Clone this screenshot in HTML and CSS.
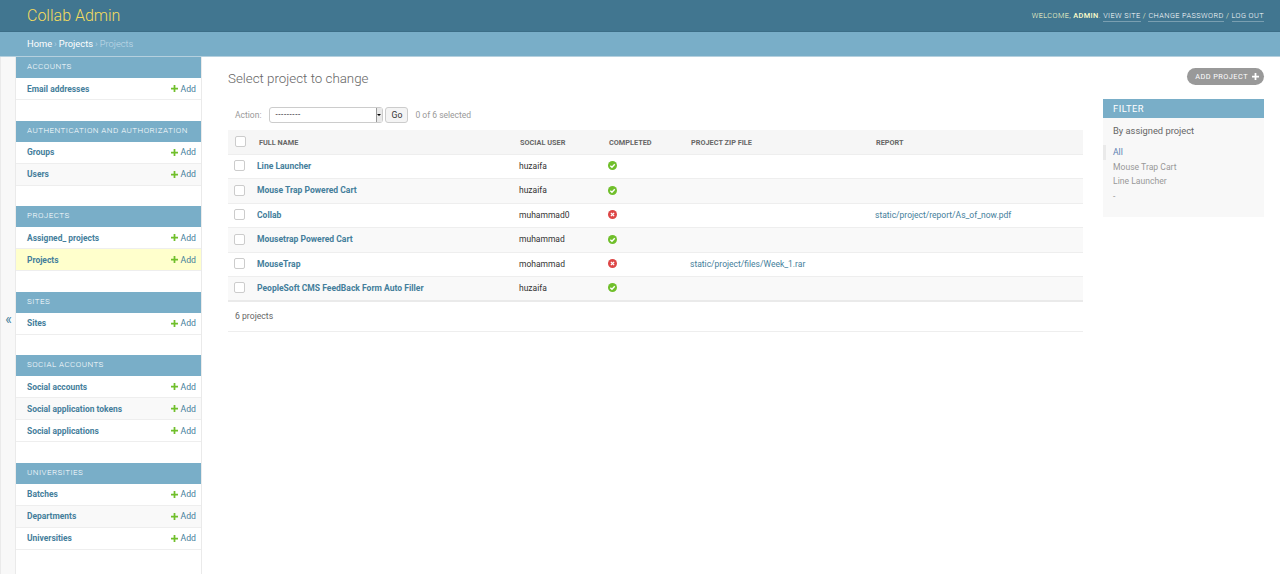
FILE: index.html
```html
<!DOCTYPE html>
<html lang="en">
<head>
<meta charset="utf-8">
<title>Select project to change</title>
<link rel="stylesheet" href="styles.css">
</head>
<body>
<header class="topbar">
  <div class="brand">Collab Admin</div>
  <div class="tools">WELCOME, <strong>ADMIN</strong>. <a>VIEW SITE</a> / <a>CHANGE PASSWORD</a> / <a>LOG OUT</a></div>
</header>
<nav class="crumbs"><a>Home</a> › <a>Projects</a> › Projects</nav>
<div class="shell">
  <button class="toggle">«</button>
  <aside class="sidebar">
    <section class="app"><h2>ACCOUNTS</h2><div class="mrow"><a class="model">Email addresses</a><a class="add"><svg class="plus" viewBox="0 0 8 8"><path d="M3 0h2v3h3v2H5v3H3V5H0V3h3z"/></svg>Add</a></div></section>
    <section class="app"><h2>AUTHENTICATION AND AUTHORIZATION</h2><div class="mrow"><a class="model">Groups</a><a class="add"><svg class="plus" viewBox="0 0 8 8"><path d="M3 0h2v3h3v2H5v3H3V5H0V3h3z"/></svg>Add</a></div><div class="mrow"><a class="model">Users</a><a class="add"><svg class="plus" viewBox="0 0 8 8"><path d="M3 0h2v3h3v2H5v3H3V5H0V3h3z"/></svg>Add</a></div></section>
    <section class="app"><h2>PROJECTS</h2><div class="mrow"><a class="model">Assigned_ projects</a><a class="add"><svg class="plus" viewBox="0 0 8 8"><path d="M3 0h2v3h3v2H5v3H3V5H0V3h3z"/></svg>Add</a></div><div class="mrow current"><a class="model">Projects</a><a class="add"><svg class="plus" viewBox="0 0 8 8"><path d="M3 0h2v3h3v2H5v3H3V5H0V3h3z"/></svg>Add</a></div></section>
    <section class="app"><h2>SITES</h2><div class="mrow"><a class="model">Sites</a><a class="add"><svg class="plus" viewBox="0 0 8 8"><path d="M3 0h2v3h3v2H5v3H3V5H0V3h3z"/></svg>Add</a></div></section>
    <section class="app"><h2>SOCIAL ACCOUNTS</h2><div class="mrow"><a class="model">Social accounts</a><a class="add"><svg class="plus" viewBox="0 0 8 8"><path d="M3 0h2v3h3v2H5v3H3V5H0V3h3z"/></svg>Add</a></div><div class="mrow"><a class="model">Social application tokens</a><a class="add"><svg class="plus" viewBox="0 0 8 8"><path d="M3 0h2v3h3v2H5v3H3V5H0V3h3z"/></svg>Add</a></div><div class="mrow"><a class="model">Social applications</a><a class="add"><svg class="plus" viewBox="0 0 8 8"><path d="M3 0h2v3h3v2H5v3H3V5H0V3h3z"/></svg>Add</a></div></section>
    <section class="app"><h2>UNIVERSITIES</h2><div class="mrow"><a class="model">Batches</a><a class="add"><svg class="plus" viewBox="0 0 8 8"><path d="M3 0h2v3h3v2H5v3H3V5H0V3h3z"/></svg>Add</a></div><div class="mrow"><a class="model">Departments</a><a class="add"><svg class="plus" viewBox="0 0 8 8"><path d="M3 0h2v3h3v2H5v3H3V5H0V3h3z"/></svg>Add</a></div><div class="mrow"><a class="model">Universities</a><a class="add"><svg class="plus" viewBox="0 0 8 8"><path d="M3 0h2v3h3v2H5v3H3V5H0V3h3z"/></svg>Add</a></div></section>
  </aside>
  <main class="content">
    <div class="titlebar">
      <h1>Select project to change</h1>
      <a class="addbtn">ADD PROJECT<svg class="addplus" viewBox="0 0 8 8"><path d="M3 0h2v3h3v2H5v3H3V5H0V3h3z"/></svg></a>
    </div>
    <div class="columns">
      <div class="list">
        <div class="actions">
          <label>Action:</label>
          <div class="select"><span>---------</span><span class="arrow"></span></div>
          <button class="go">Go</button>
          <span class="count">0 of 6 selected</span>
        </div>
        <table class="results">
          <thead><tr><th class="c-check"><span class="box"></span></th><th class="c-name">FULL NAME</th><th class="c-user">SOCIAL USER</th><th class="c-done">COMPLETED</th><th class="c-zip">PROJECT ZIP FILE</th><th>REPORT</th></tr></thead>
          <tbody>
            <tr><td><span class="box"></span></td><td><a class="name">Line Launcher</a></td><td>huzaifa</td><td><svg class="state" viewBox="0 0 10 10"><circle cx="5" cy="5" r="5" fill="#70bf2b"/><path d="M2.6 5.2 4.4 7 7.5 3.6" class="mark"/></svg></td><td></td><td></td></tr>
            <tr><td><span class="box"></span></td><td><a class="name">Mouse Trap Powered Cart</a></td><td>huzaifa</td><td><svg class="state" viewBox="0 0 10 10"><circle cx="5" cy="5" r="5" fill="#70bf2b"/><path d="M2.6 5.2 4.4 7 7.5 3.6" class="mark"/></svg></td><td></td><td></td></tr>
            <tr><td><span class="box"></span></td><td><a class="name">Collab</a></td><td>muhammad0</td><td><svg class="state" viewBox="0 0 10 10"><circle cx="5" cy="5" r="5" fill="#dd4646"/><path d="M3.2 3.2 6.8 6.8M6.8 3.2 3.2 6.8" class="mark"/></svg></td><td></td><td><a class="file">static/project/report/As_of_now.pdf</a></td></tr>
            <tr><td><span class="box"></span></td><td><a class="name">Mousetrap Powered Cart</a></td><td>muhammad</td><td><svg class="state" viewBox="0 0 10 10"><circle cx="5" cy="5" r="5" fill="#70bf2b"/><path d="M2.6 5.2 4.4 7 7.5 3.6" class="mark"/></svg></td><td></td><td></td></tr>
            <tr><td><span class="box"></span></td><td><a class="name">MouseTrap</a></td><td>mohammad</td><td><svg class="state" viewBox="0 0 10 10"><circle cx="5" cy="5" r="5" fill="#dd4646"/><path d="M3.2 3.2 6.8 6.8M6.8 3.2 3.2 6.8" class="mark"/></svg></td><td><a class="file">static/project/files/Week_1.rar</a></td><td></td></tr>
            <tr><td><span class="box"></span></td><td><a class="name">PeopleSoft CMS FeedBack Form Auto Filler</a></td><td>huzaifa</td><td><svg class="state" viewBox="0 0 10 10"><circle cx="5" cy="5" r="5" fill="#70bf2b"/><path d="M2.6 5.2 4.4 7 7.5 3.6" class="mark"/></svg></td><td></td><td></td></tr>
          </tbody>
        </table>
        <p class="paginator">6 projects</p>
      </div>
      <aside class="filter">
        <h2>FILTER</h2>
        <h3>By assigned project</h3>
        <ul>
          <li class="selected"><a>All</a></li>
          <li><a>Mouse Trap Cart</a></li>
          <li><a>Line Launcher</a></li>
          <li><a>-</a></li>
        </ul>
      </aside>
    </div>
  </main>
</div>
</body>
</html>
```
FILE: styles.css
```css
* { box-sizing: border-box; }
html, body { margin: 0; height: 100%; }
body { font-family: Roboto, "Liberation Sans", sans-serif; font-size: 9.33px; color: #333; background: #fff; overflow: hidden; }
a { text-decoration: none; }

.topbar { height: 32px; background: #417690; border-bottom: 1px solid #3c6e87; display: flex; justify-content: space-between; align-items: center; padding: 0 16px 0 27px; }
.brand { font-size: 16px; font-weight: 300; color: #f5dd5d; }
.tools { font-size: 7.33px; font-weight: 300; letter-spacing: .42px; color: #ffc; }
.tools strong { font-weight: 500; }
.tools a { color: #fff; border-bottom: 1px solid rgba(255,255,255,.3); padding-bottom: 1px; }

.crumbs { height: 25px; background: #79aec8; padding: 0 27px; line-height: 23px; font-size: 9.33px; font-weight: 300; word-spacing: -.3px; color: #c4dce8; border-bottom: 1px solid #b5d0de; }
.crumbs a { color: #fff; font-weight: 400; }

.shell { display: flex; height: 517px; }
.toggle { width: 15px; flex: none; padding: 7px 0 0 1px; border: 0; border-left: 1px solid #eaeaea; background: #f8f8f8; color: #447e9b; font-family: Roboto, sans-serif; font-size: 14px; line-height: 1; }
.sidebar { width: 187px; flex: none; border-left: 1px solid #eaeaea; border-right: 1px solid #eaeaea; }
.app { margin-bottom: 20.5px; }
.app h2 { margin: 0; height: 21px; line-height: 20.5px; padding: 0 11px; background: #79aec8; color: #fff; font-size: 8px; font-weight: 300; letter-spacing: .47px; white-space: nowrap; }
.mrow { height: 22px; display: flex; justify-content: space-between; align-items: center; padding: 0 5px 0 11px; border-bottom: 1px solid #eee; }
.mrow:nth-child(3) { background: #f9f9f9; }
.mrow.current { background: #ffc; }
.model { font-size: 8.45px; font-weight: 700; color: #447e9b; }
.add { color: #447e9b; font-size: 8.67px; display: flex; align-items: center; gap: 3px; }
.plus { width: 7px; height: 7px; fill: #70bf2b; }

.content { flex: 1; min-width: 0; padding: 0 16px 0 26px; }
.titlebar { display: flex; justify-content: space-between; align-items: flex-start; height: 42px; padding-top: 11px; }
h1 { margin: 0; padding-top: 1px; font-size: 13.33px; font-weight: 300; color: #666; line-height: 19px; }
.addbtn { height: 17px; display: flex; align-items: center; gap: 4px; padding: 0 5px 0 8px; background: #999; border-radius: 9px; color: #fff; font-size: 7.33px; letter-spacing: .47px; }
.addplus { width: 7px; height: 7px; fill: #fff; }

.columns { display: flex; gap: 20px; align-items: flex-start; }
.list { flex: 1; min-width: 0; }
.actions { height: 31px; display: flex; align-items: center; padding: 0 7px; color: #999; font-size: 8.5px; }
.actions label { margin-right: 8px; }
.select { width: 114px; height: 16px; border: 1px solid #ccc; border-radius: 3px; display: flex; justify-content: space-between; align-items: center; padding-left: 5px; color: #000; font-size: 8px; letter-spacing: .6px; background: #fff; }
.arrow { width: 6px; height: 14px; background: #e9e9e9; border-left: 1px solid #999; position: relative; }
.arrow::after { content: ""; position: absolute; left: 0; top: 6px; border: 2.5px solid transparent; border-top-color: #000; }
.go { width: 23px; height: 16px; margin: 0 7px 0 2px; padding: 0; border: 1px solid #ccc; border-radius: 3px; background: #f4f4f4; color: #333; font-family: Roboto, sans-serif; font-size: 8.67px; }

.results { width: 100%; border-collapse: collapse; table-layout: fixed; }
.results th { height: 24px; background: #f6f6f6; text-align: left; font-size: 7.33px; font-weight: 700; color: #666; padding: 2px 0 0 1px; border-bottom: 1px solid #eee; }
.results td { height: 24.5px; padding: 0 0 1.5px; border-bottom: 1px solid #eee; font-size: 8.5px; color: #333; vertical-align: middle; }
.results tbody tr:nth-child(even) { background: #f9f9f9; }
.results tbody tr:last-child td { border-bottom: 2px solid #eaeaea; }
.results th.c-check { width: 29px; padding-top: 0; }
.results th.c-name { width: 262px; padding-left: 2px; }
.c-user { width: 90px; }
.results th.c-done { width: 81px; padding-left: 0; }
.c-zip { width: 185px; }
.box { display: block; width: 11px; height: 11px; margin-left: 6px; background: #fff; border: 1px solid #ccc; border-radius: 2px; }
.name { font-weight: 700; font-size: 8.55px; color: #447e9b; }
.file { color: #447e9b; }
.state { display: block; width: 9px; height: 9px; margin-left: -1px; }
.mark { fill: none; stroke: #fff; stroke-width: 1.5; }
.paginator { margin: 0; height: 30px; line-height: 28px; padding-left: 7px; border-bottom: 1px solid #eee; color: #666; font-size: 8.67px; }

.filter { width: 161px; flex: none; height: 118px; background: #f8f8f8; }
.filter h2 { margin: 0; height: 19px; line-height: 19px; padding: 0 10px; background: #79aec8; color: #fff; font-size: 9.33px; font-weight: 400; letter-spacing: .5px; }
.filter h3 { margin: 0; padding: 7px 10px 0; font-size: 9.33px; font-weight: 400; color: #666; line-height: 12px; }
.filter ul { margin: 8px 0 0; padding: 0; list-style: none; }
.filter li { height: 14.6px; line-height: 14.6px; padding-left: 10px; font-size: 8.6px; }
.filter li a { color: #999; }
.filter li.selected { border-left: 3px solid #eaeaea; padding-left: 7px; }
.filter li.selected a { color: #5b80b2; }
```
